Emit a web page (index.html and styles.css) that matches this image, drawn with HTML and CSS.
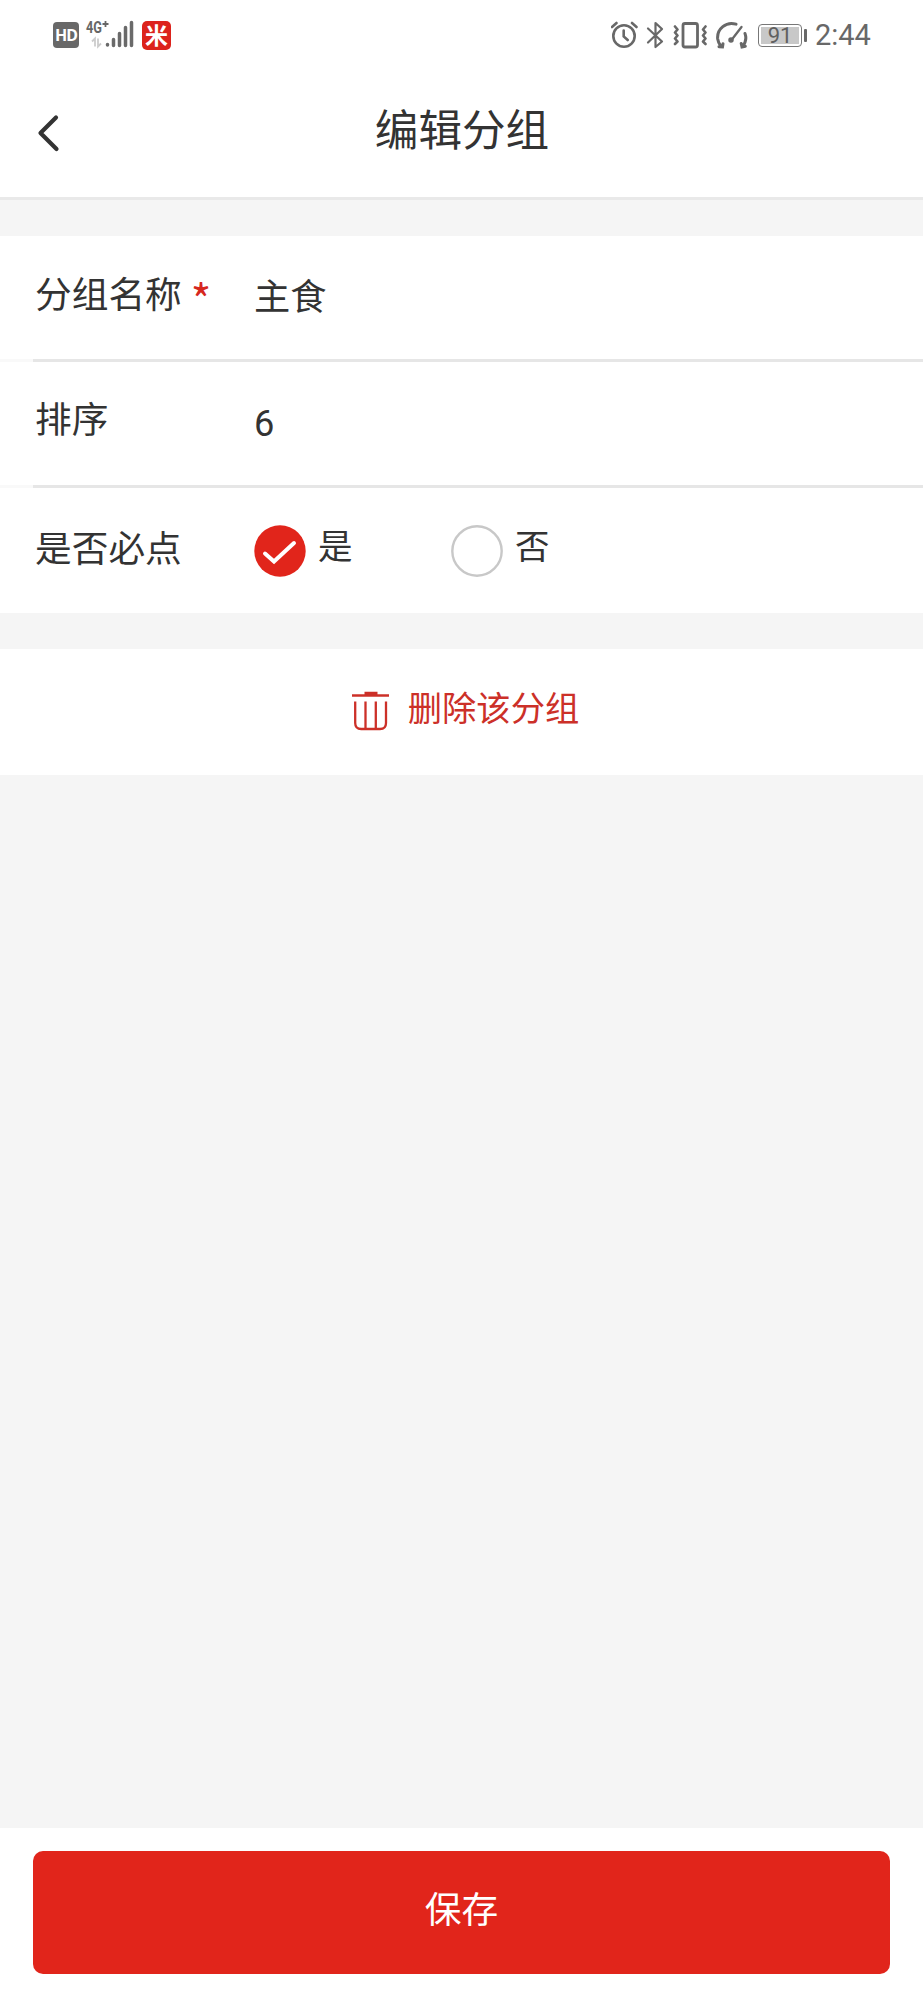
FILE: index.html
```html
<!DOCTYPE html>
<html lang="zh-CN">
<head>
<meta charset="utf-8">
<title>编辑分组</title>
<link rel="stylesheet" href="styles.css">
</head>
<body>
<div class="screen">
  <div class="status">
    <span class="hd">HD</span>
    <svg class="signal" width="50" height="32" viewBox="85 19 50 32">
      <text class="net" x="86" y="33" textLength="16" lengthAdjust="spacingAndGlyphs">4G</text>
      <path d="M102.500 24h6M105.500 21v6" stroke="#666" stroke-width="1.800"/>
      <path d="M92 41.500l3-3v8M98 38.500v8l3-3" fill="none" stroke="#ccc" stroke-width="1.800"/>
      <path d="M107.500 44.500v.5M113.500 39.500v6M119.500 33.500v12M125.500 27.500v18M131.500 22.500v23" fill="none" stroke="#6a6a6a" stroke-width="3.500" stroke-linecap="round"/>
    </svg>
    <span class="mi">米</span>
    <span class="spring"></span>
    <svg width="28" height="28" viewBox="610 20 28 28" fill="none" stroke="#686868" stroke-width="2.600" stroke-linecap="round">
      <circle cx="623" cy="35" r="10.700"/>
      <path d="M611 26l4.500-4M635.500 26l-4.500-4M622.700 29.500v6l4 3.500"/>
    </svg>
    <svg class="bt" width="18" height="28" viewBox="645 20 18 28" fill="none" stroke="#686868" stroke-width="2.200" stroke-linejoin="round" stroke-linecap="round">
      <path d="M647 27.500L661 40.500L654.500 46V22L661 28L647 41.500"/>
    </svg>
    <svg class="vib" width="34" height="28" viewBox="672 20 34 28" fill="none" stroke="#686868" stroke-width="2.600" stroke-linejoin="round" stroke-linecap="round">
      <rect x="682" y="22.500" width="14.500" height="23.500" rx="2" stroke-width="2.800"/>
      <path d="M674 25.500l2.500 3-2.500 3 2.500 3-2.500 3 2.500 3-2.500 2.500M704.500 25.500l-2.500 3 2.500 3-2.500 3 2.500 3-2.500 3 2.500 2.500"/>
    </svg>
    <svg class="gauge" width="33" height="30" viewBox="714 19 33 30" fill="none" stroke="#686868" stroke-width="3" stroke-linecap="round">
      <path d="M735 23.200A14 14 0 0 0 716.700 38Q717.300 42 720 45.500M718 45.700l3.500.3.500-3.200M744 32.500Q746.500 39.500 741.500 45.500M740.200 42.500l.8 3.500 3.300-.7"/>
      <path d="M740.500 26l-10 13" stroke-width="2.300"/>
      <circle cx="730" cy="39" r="2" fill="#686868" stroke-width="1.500"/>
    </svg>
    <span class="battery"><span class="level">91</span></span>
    <span class="cap"></span>
    <span class="time">2:44</span>
  </div>
  <div class="header">
    <svg class="back" width="24" height="40" viewBox="0 0 24 40" fill="none" stroke="#333" stroke-width="4.200" stroke-linecap="round" stroke-linejoin="round"><path d="M20 4.500L4.500 20L20.500 36"/></svg>
    <h1 class="title">编辑分组</h1>
  </div>
  <div class="card form">
    <div class="row"><span class="label">分组名称<span class="star">*</span></span><span class="value">主食</span></div>
    <div class="line"></div>
    <div class="row"><span class="label order">排序</span><span class="value number">6</span></div>
    <div class="line"></div>
    <div class="row last">
      <span class="label must">是否必点</span>
      <svg class="radio" width="52" height="52" viewBox="0 0 52 52"><circle cx="26" cy="26" r="25.700" fill="#e1251b"/><path d="M11 28.500l9 8L40 18" fill="none" stroke="#fff" stroke-width="4" stroke-linecap="round"/></svg>
      <span class="choice first">是</span>
      <svg class="radio" width="52" height="52" viewBox="0 0 52 52"><circle cx="26" cy="26" r="24.700" fill="#fff" stroke="#c8c8c8" stroke-width="2.400"/></svg>
      <span class="choice">否</span>
    </div>
  </div>
  <div class="card delete">
    <svg width="38" height="40" viewBox="0 0 38 40" fill="none" stroke="#cc3028" stroke-width="2.300">
      <path d="M0 4.500h37"/><path d="M12.500 2.500h13" stroke-width="3.500"/>
      <path d="M3.200 10.500V32Q3.200 38 9.200 38H28Q34 38 34 32V10.500M13.500 10.500V38M23.800 10.500V38"/>
    </svg>
    <span class="deltext">删除该分组</span>
  </div>
  <div class="footer"><div class="save">保存</div></div>
</div>
</body>
</html>
```
FILE: styles.css
```css
body { margin: 0; }
.screen {
  display: flex;
  flex-direction: column;
  width: 923px;
  height: 2000px;
  background: #f5f5f5;
  color: #333;
  font-family: "Noto Sans CJK SC", sans-serif;
}
.status {
  display: flex;
  align-items: center;
  height: 70px;
  box-sizing: border-box;
  padding: 0 53px;
  background: #fff;
}
.hd {
  width: 26px;
  height: 26px;
  border-radius: 4px;
  background: #686868;
  color: #fff;
  font: bold 16px/26px "Noto Sans", sans-serif;
  letter-spacing: -1px;
  text-align: center;
}
.signal { margin-left: 6px; }
.net { font: bold 16px Roboto, sans-serif; fill: #666; }
.mi {
  width: 29px;
  height: 29px;
  margin-left: 7px;
  border-radius: 5px;
  background: #dc231c;
  color: #fff;
  font-size: 23px;
  font-weight: 700;
  line-height: 27px;
  text-align: center;
}
.spring { flex: 1; }
.bt { margin-left: 7px; }
.vib { margin-left: 9px; }
.gauge { margin-left: 8px; }
.battery {
  box-sizing: border-box;
  width: 44px;
  height: 23px;
  margin-left: 10px;
  padding: 2px;
  border: 1.5px solid #777;
  border-radius: 4px;
}
.level {
  display: block;
  height: 17px;
  background: #c8c8c8;
  color: #606060;
  font: 22px/17px Roboto, sans-serif;
  text-align: center;
}
.cap { width: 3px; height: 13px; margin-left: 2px; border-radius: 1px; background: #686868; }
.time { width: 55px; margin-left: 8px; color: #686868; font: 29px/34px Roboto, sans-serif; white-space: nowrap; }
.header {
  display: grid;
  grid-template-columns: 80px 1fr 80px;
  align-items: center;
  height: 127px;
  background: #fff;
  border-bottom: 3px solid #e9e9e9;
}
.back { margin: 0 0 2px 36px; }
.title { margin: 0 0 13px 1px; font-size: 43.600px; font-weight: 400; line-height: 60px; text-align: center; }
.card { background: #fff; }
.form { margin-top: 36px; height: 377px; }
.row { display: flex; align-items: flex-start; height: 123px; padding-left: 35px; }
.label { width: 219px; padding-top: 31px; font-size: 36.700px; line-height: 50px; white-space: nowrap; }
.star { margin-left: 9px; color: #d6271e; font-size: 44px; line-height: 0; vertical-align: -9px; }
.value { padding-top: 33px; font-size: 36.200px; line-height: 50px; }
.number { padding-top: 37px; font-family: Roboto, sans-serif; }
.line { height: 3px; background: linear-gradient(90deg, #f9f9f9 33px, #e6e6e6 33px); }
.order { padding-top: 30px; }
.must { padding-top: 33px; }
.radio { margin-top: 37px; }
.choice { width: 132px; padding: 31px 0 0 12px; font-size: 34.500px; line-height: 50px; }
.choice.first { width: 133px; }
.delete {
  display: flex;
  justify-content: center;
  align-items: center;
  gap: 18px;
  height: 126px;
  margin-top: 36px;
  padding-left: 8px;
  color: #cc3028;
}
.delete svg { margin-bottom: 2px; }
.deltext { padding-bottom: 12px; font-size: 34.300px; line-height: 50px; }
.footer { height: 172px; margin-top: auto; box-sizing: border-box; padding: 23px 33px 0; background: #fff; }
.save {
  height: 123px;
  border-radius: 10px;
  background: #e1251b;
  color: #fff;
  font-size: 36.700px;
  line-height: 113px;
  text-align: center;
}
```
